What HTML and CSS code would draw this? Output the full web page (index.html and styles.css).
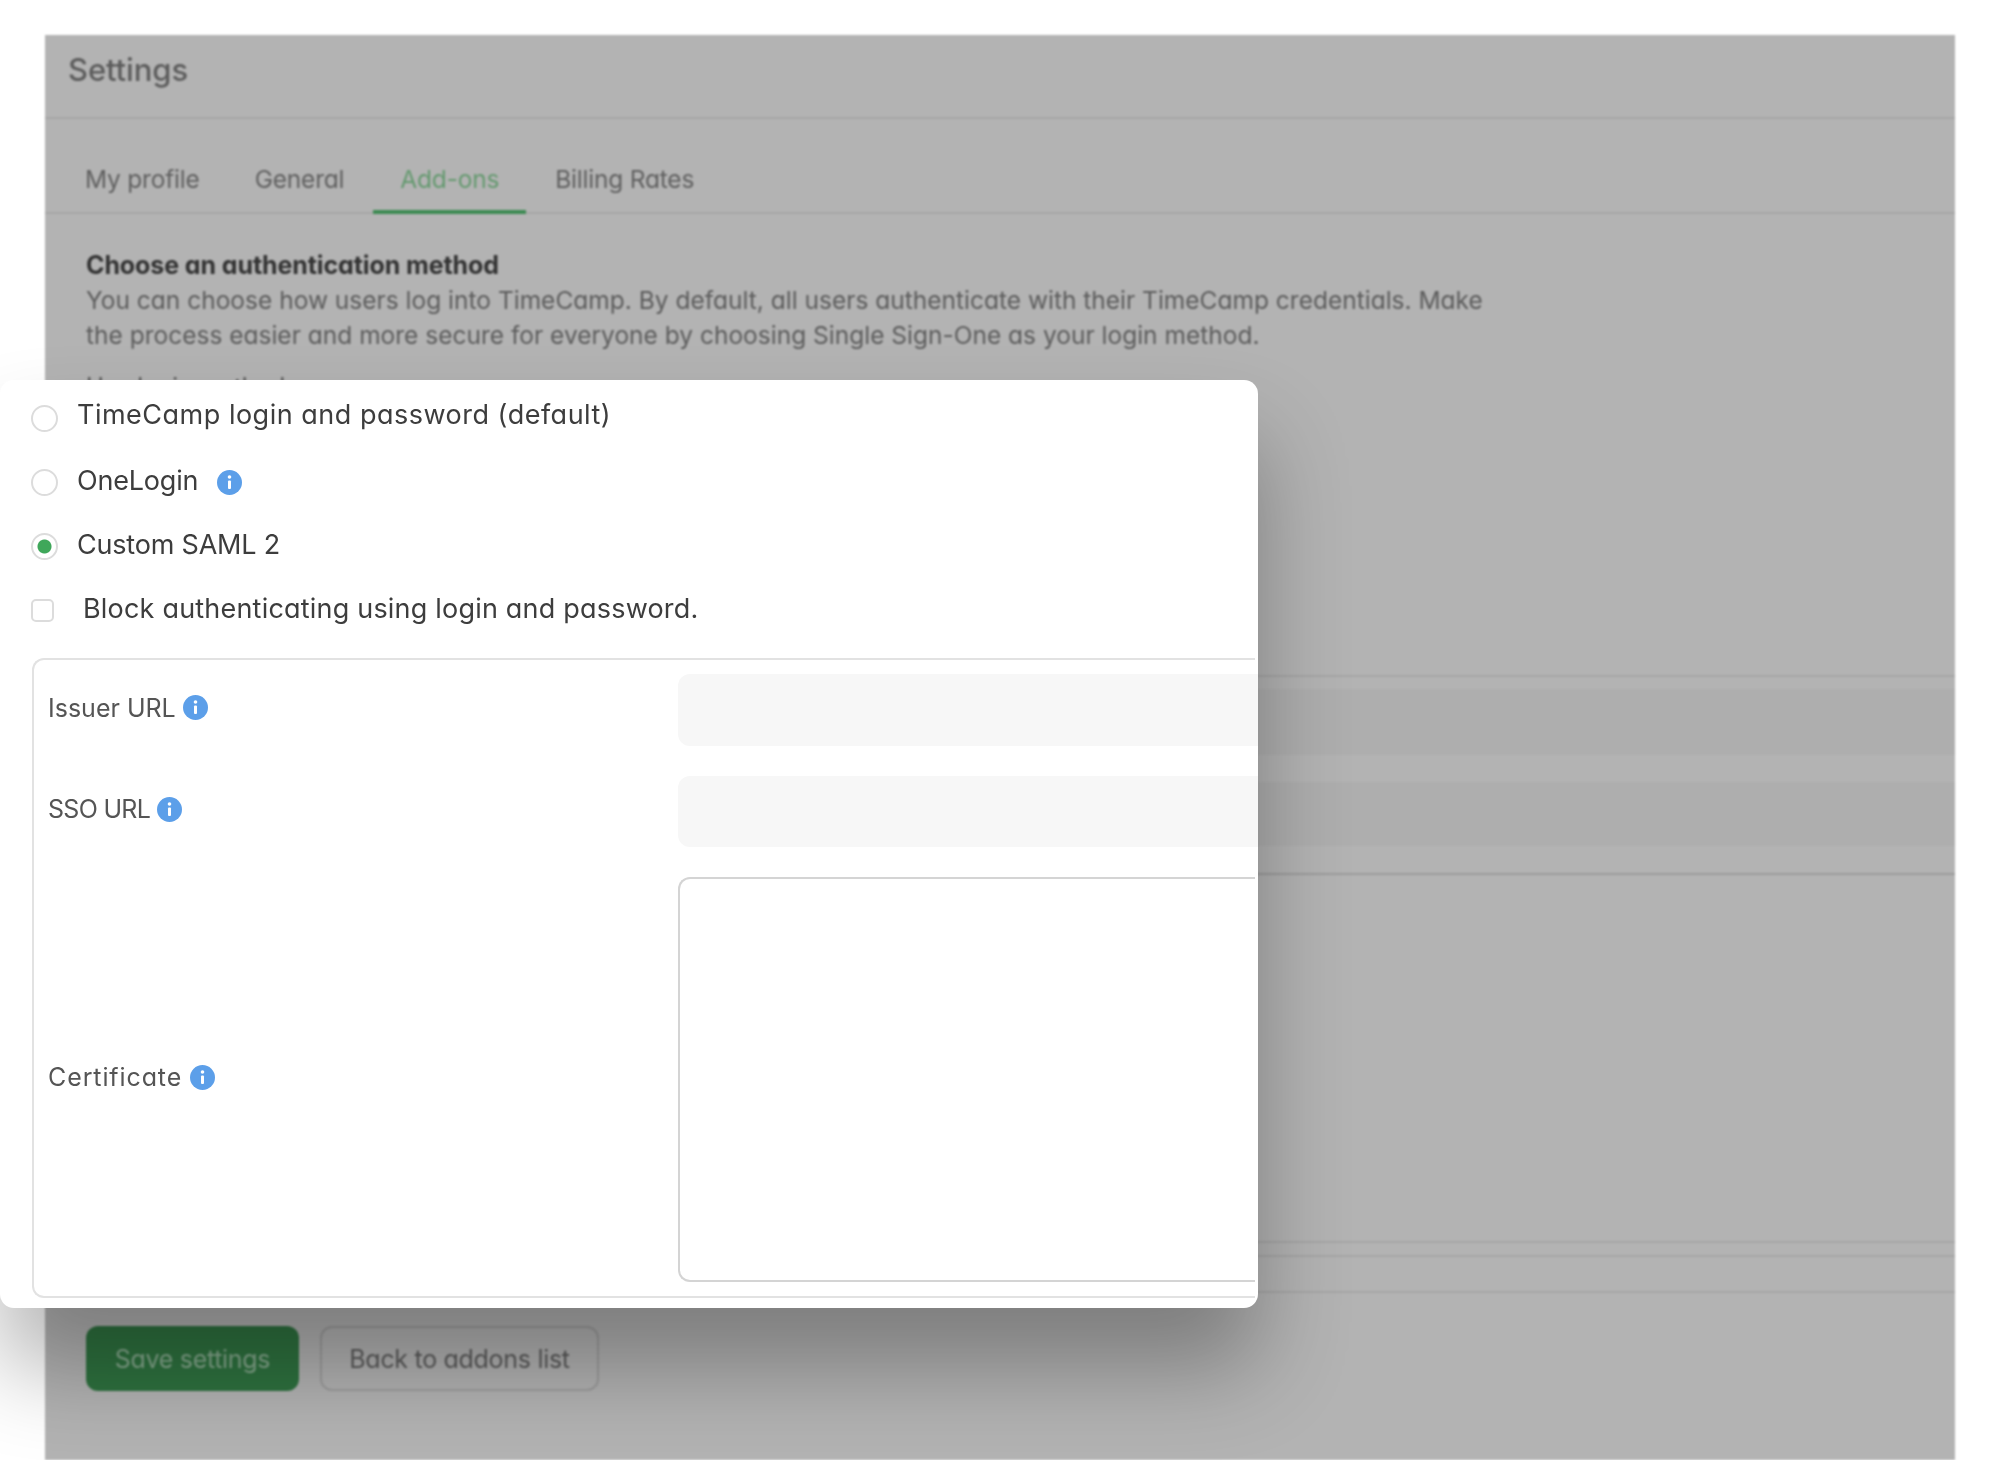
FILE: index.html
```html
<!DOCTYPE html>
<html lang="en">
<head>
    <meta charset="UTF-8">
    <title>Settings</title>
    <link rel="stylesheet" href="styles.css">
</head>
<body>

    <div class="panel">
        <h1 class="panel-title">Settings</h1>

        <nav class="tabs">
            <a class="tab">My profile</a>
            <a class="tab">General</a>
            <a class="tab tab-active">Add-ons</a>
            <a class="tab">Billing Rates</a>
        </nav>

        <div class="content">
            <h2 class="section-title">Choose an authentication method</h2>
            <p class="section-text">You can choose how users log into TimeCamp. By default, all users authenticate with their TimeCamp credentials. Make<br>the process easier and more secure for everyone by choosing Single Sign-One as your login method.</p>
            <p class="method-label">Use login method:</p>

            <div class="ghost-form">
                <div class="ghost-field"></div>
                <div class="ghost-field ghost-field-second"></div>
            </div>

            <div class="ghost-line ghost-line-a"></div>
            <div class="ghost-line ghost-line-b"></div>
            <div class="ghost-line ghost-line-c"></div>

            <div class="actions">
                <button class="btn btn-save">Save settings</button>
                <button class="btn btn-back">Back to addons list</button>
            </div>
        </div>
    </div>

    <div class="modal">
        <label class="option"><input type="radio" name="method"> <span>TimeCamp login and password (default)</span></label>
        <label class="option"><input type="radio" name="method"> <span class="tight">OneLogin</span>
            <svg class="info info-wide" viewBox="0 0 25 25"><circle cx="12.5" cy="12.5" r="12.5"/><rect x="11" y="10.5" width="3" height="8.5" rx="1"/><circle class="info-dot" cx="12.5" cy="7" r="1.8"/></svg>
        </label>
        <label class="option"><input type="radio" name="method" checked> <span class="tight">Custom SAML 2</span></label>
        <label class="option option-check"><input type="checkbox"> <span>Block authenticating using login and password.</span></label>

        <div class="saml-box">
            <div class="saml-label">Issuer URL
                <svg class="info" viewBox="0 0 25 25"><circle cx="12.5" cy="12.5" r="12.5"/><rect x="11" y="10.5" width="3" height="8.5" rx="1"/><circle class="info-dot" cx="12.5" cy="7" r="1.8"/></svg>
            </div>
            <input class="saml-input saml-input-tall" type="text">

            <div class="saml-label saml-label-narrow">SSO URL
                <svg class="info" viewBox="0 0 25 25"><circle cx="12.5" cy="12.5" r="12.5"/><rect x="11" y="10.5" width="3" height="8.5" rx="1"/><circle class="info-dot" cx="12.5" cy="7" r="1.8"/></svg>
            </div>
            <input class="saml-input" type="text">

            <div class="saml-label saml-label-wide">Certificate
                <svg class="info" viewBox="0 0 25 25"><circle cx="12.5" cy="12.5" r="12.5"/><rect x="11" y="10.5" width="3" height="8.5" rx="1"/><circle class="info-dot" cx="12.5" cy="7" r="1.8"/></svg>
            </div>
            <textarea class="saml-textarea"></textarea>
        </div>
    </div>

</body>
</html>
```

FILE: styles.css
```css
* {
    box-sizing: border-box;
}
body {
    margin: 0;
    height: 1460px;
    padding: 35px 45px 0;
    background: #fff;
    font-family: Inter, "Liberation Sans", sans-serif;
    font-feature-settings: "cv11";
    overflow: hidden;
    position: relative;
}

/* dimmed page behind the popup */
.panel {
    width: 1910px;
    height: 1425px;
    background: #b3b3b3;
    filter: blur(0.9px);
}
.panel-title {
    margin: 0;
    height: 84px;
    padding: 0 23px;
    border-bottom: 2px solid #a6a6a6;
    font-size: 31px;
    line-height: 70px;
    font-weight: 500;
    letter-spacing: -0.1px;
    color: #5c5c5c;
}
.tabs {
    display: flex;
    gap: 3px;
    height: 95px;
    padding-left: 14px;
    border-bottom: 2px solid #a6a6a6;
}
.tab {
    padding: 0 26px;
    font-size: 24.5px;
    line-height: 120px;
    letter-spacing: -0.2px;
    color: #606060;
}
.tab-active {
    height: 95px;
    padding: 0 27px;
    border-bottom: 4px solid #3c8a52;
    color: #64996f;
}
.content {
    padding: 34px 41px 0;
}
.section-title {
    margin: 0;
    font-size: 25px;
    line-height: 35px;
    font-weight: 700;
    letter-spacing: -0.1px;
    color: #333;
}
.section-text {
    margin: 0;
    font-size: 24.5px;
    line-height: 35px;
    color: #5c5c5c;
}
.method-label {
    margin: 16px 0 0;
    font-size: 24px;
    line-height: 35px;
    color: #555;
}
.ghost-form {
    margin-top: 271px;
    margin-left: 600px;
    margin-right: -41px;
    height: 200px;
    padding-top: 14px;
    position: relative;
}
.ghost-form::before, .ghost-form::after {
    content: "";
    position: absolute;
    left: -600px;
    right: 0;
    height: 2px;
    background: #a6a6a6;
}
.ghost-form::before {
    top: 0;
}
.ghost-form::after {
    bottom: 0;
    background: #9b9b9b;
}
.ghost-field {
    height: 66px;
    background: #aeaeae;
}
.ghost-field-second {
    margin-top: 27px;
    height: 64px;
}
.ghost-line {
    height: 2px;
    margin-right: -41px;
    background: #a6a6a6;
}
.ghost-line-a {
    margin-top: 366px;
}
.ghost-line-b {
    margin-top: 12px;
}
.ghost-line-c {
    margin-top: 34px;
}
.actions {
    display: flex;
    gap: 21px;
    margin-top: 33px;
}
.btn {
    height: 65px;
    border-radius: 12px;
    font-family: inherit;
    font-feature-settings: inherit;
    font-size: 25px;
    letter-spacing: -0.3px;
}
.btn-save {
    width: 213px;
    border: none;
    background: #2e723f;
    color: #86a98e;
}
.btn-back {
    width: 279px;
    border: 2px solid #9d9d9d;
    background: transparent;
    color: #5a5a5a;
}

/* popup */
.modal {
    position: absolute;
    left: 0;
    top: 380px;
    width: 1258px;
    height: 928px;
    padding: 6px 0 0 31px;
    background: #fff;
    border-radius: 14px;
    box-shadow: 0 60px 90px rgba(0, 0, 0, 0.3);
    overflow: hidden;
    filter: blur(0.5px);
}
.option {
    display: flex;
    align-items: center;
    height: 64px;
    font-size: 27px;
    color: #3d3d3d;
}
.option span {
    margin-left: 19px;
    letter-spacing: 0.2px;
    position: relative;
    top: -2px;
}
.option:first-child span {
    top: -4px;
    letter-spacing: 0.5px;
}
.option .tight {
    letter-spacing: -0.2px;
}
.option input {
    appearance: none;
    flex: none;
    width: 27px;
    height: 27px;
    margin: 0;
    border: 2px solid #dcdcdc;
    border-radius: 50%;
    background: #fff;
}
.option input:checked {
    background: radial-gradient(circle, #3fa75a 6.5px, #fff 7.5px);
}
.option-check input {
    width: 23px;
    height: 23px;
    border-radius: 5px;
}
.option-check span {
    margin-left: 29px;
}
.info {
    width: 25px;
    height: 25px;
    flex: none;
    fill: #5c9fe9;
    vertical-align: middle;
    position: relative;
    top: -2px;
}
.info rect, .info .info-dot {
    fill: #fff;
}
.info-wide {
    margin-left: 19px;
    top: 0;
}
.saml-box {
    display: grid;
    grid-template-columns: 630px 1fr;
    row-gap: 30px;
    align-items: center;
    align-content: start;
    width: 1223px;
    height: 640px;
    margin: 16px 0 0 1px;
    padding: 14px 0 14px 14px;
    border: 2px solid #e2e2e2;
    border-right: none;
    border-radius: 12px 0 0 12px;
}
.saml-label {
    padding-bottom: 5px;
    font-size: 25px;
    color: #555;
}
.saml-label-narrow {
    letter-spacing: -0.7px;
}
.saml-label-wide {
    letter-spacing: 0.9px;
}
.saml-input {
    height: 71px;
    width: calc(100% + 4px);
    border: none;
    border-radius: 12px 0 0 12px;
    background: #f7f7f7;
}
.saml-input-tall {
    height: 72px;
}
.saml-textarea {
    display: block;
    height: 405px;
    width: 100%;
    border: 2px solid #d4d4d4;
    border-right: none;
    border-radius: 12px 0 0 12px;
    background: #fff;
    resize: none;
}
```
